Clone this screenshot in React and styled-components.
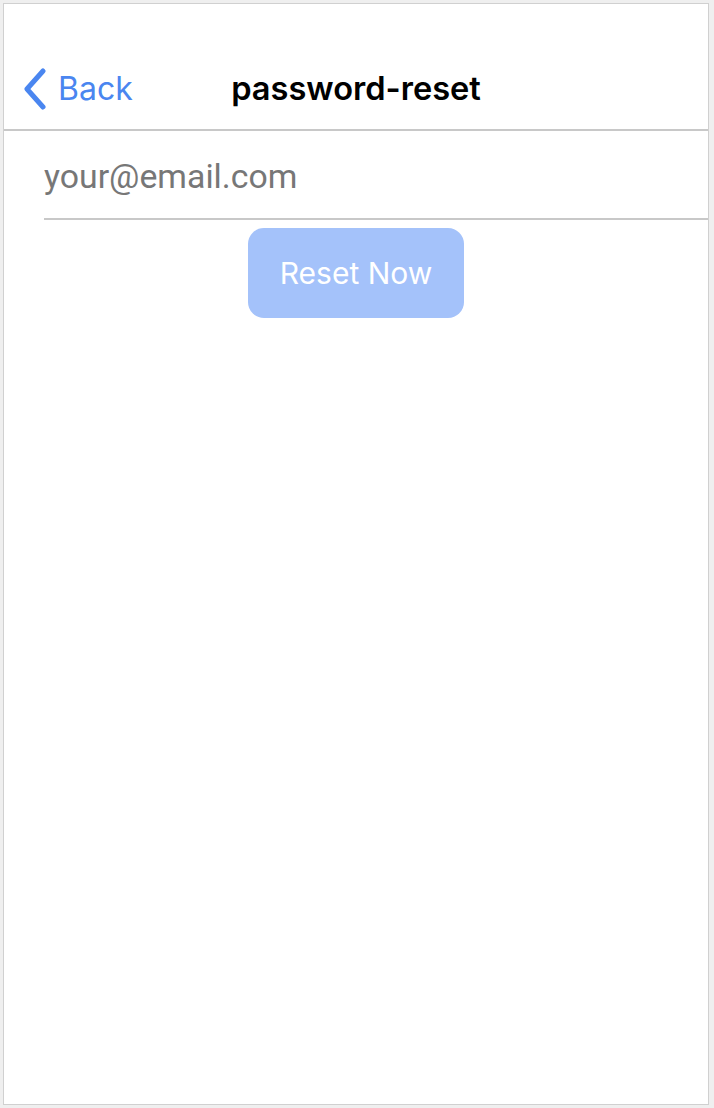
import React from "react";
import styled, { createGlobalStyle } from "styled-components";

const Global = createGlobalStyle`
  html, body { margin: 0; padding: 0; background: #efefef; }
  body { font-family: Inter, "Noto Sans", sans-serif; }
  * { box-sizing: border-box; }
`;

const Page = styled.div`
  padding: 3px 5px 3px 3px;
  height: 1108px;
`;

const Frame = styled.div`
  height: 1102px;
  background: #fff;
  border: 1px solid #d0d0d0;
  display: flex;
  flex-direction: column;
`;

const Header = styled.header`
  height: 127px;
  border-bottom: 2px solid #c8c8c8;
  display: grid;
  grid-template-columns: 1fr auto 1fr;
  align-items: end;
  padding: 0 0 19px 0;
`;

const BackButton = styled.button`
  justify-self: start;
  display: flex;
  align-items: center;
  gap: 11px;
  border: 0;
  background: none;
  padding: 0 0 0 19px;
  margin-bottom: -1px;
  color: #4a86f0;
  font-family: Inter, sans-serif;
  font-size: 32px;
  line-height: 44px;
  cursor: pointer;
`;

const Title = styled.h1`
  margin: 0;
  font-family: Inter, sans-serif;
  font-weight: 600;
  font-size: 32.6px;
  color: #000;
  line-height: 44px;
`;

const Body = styled.main`
  display: flex;
  flex-direction: column;
  align-items: center;
`;

const Field = styled.input`
  align-self: stretch;
  margin-left: 40px;
  height: 89px;
  border: 0;
  border-bottom: 2px solid #c8c8c8;
  padding: 3px 0 0 0;
  font-family: Roboto, sans-serif;
  font-size: 33.8px;
  color: #333;
  outline: none;
  &::placeholder { color: #777; }
`;

const ResetButton = styled.button`
  margin-top: 8px;
  width: 216px;
  height: 90px;
  border: 0;
  border-radius: 16px;
  background: #a4c2fa;
  color: #fff;
  font-family: Inter, sans-serif;
  font-size: 30px;
  cursor: pointer;
`;

const Chevron = () => (
  <svg width="24" height="42" viewBox="0 0 24 42">
    <path d="M20 3 L4 21 L20 39" fill="none" stroke="#4a86f0" strokeWidth="5" strokeLinecap="round" strokeLinejoin="round" />
  </svg>
);

export default function App() {
  return (
    <>
      <Global />
      <Page>
        <Frame>
          <Header>
            <BackButton>
              <Chevron />
              <span>Back</span>
            </BackButton>
            <Title>password-reset</Title>
            <span />
          </Header>
          <Body>
            <Field placeholder="your@email.com" />
            <ResetButton>Reset Now</ResetButton>
          </Body>
        </Frame>
      </Page>
    </>
  );
}
